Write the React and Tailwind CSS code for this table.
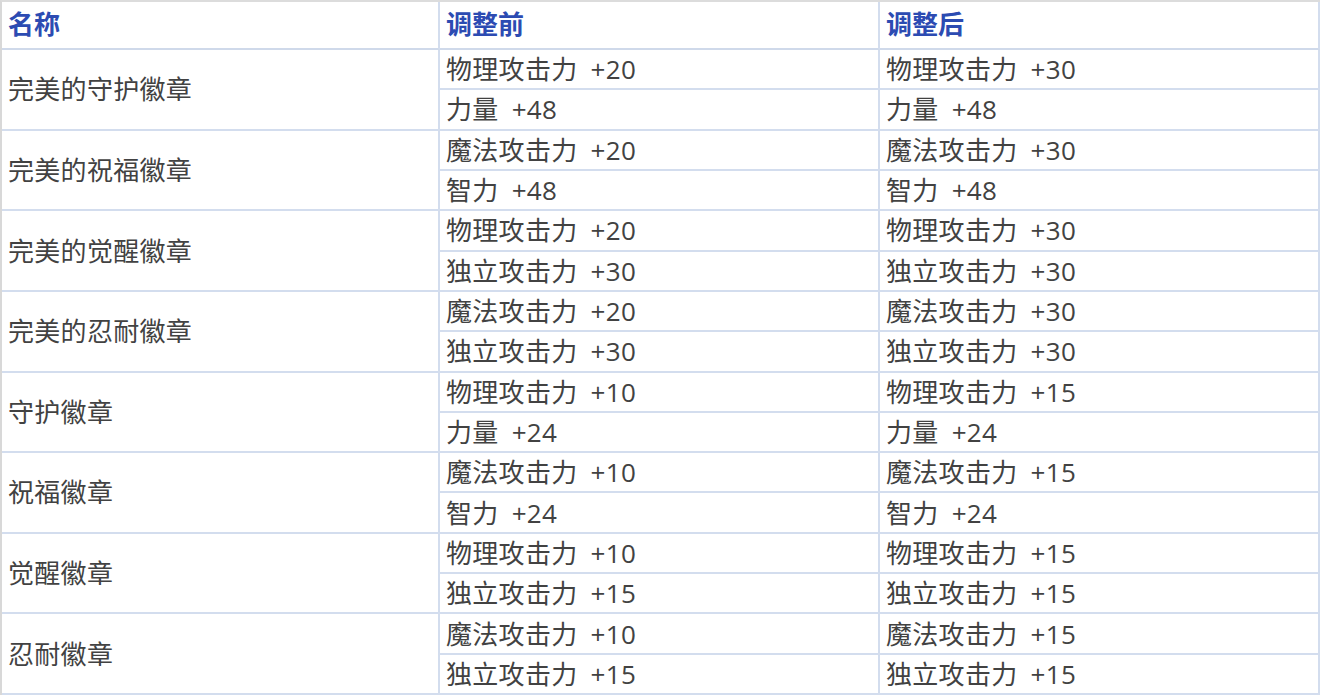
import React from 'react'

const groups = [
  { name: '完美的守护徽章', rows: [['物理攻击力 +20', '物理攻击力 +30'], ['力量 +48', '力量 +48']] },
  { name: '完美的祝福徽章', rows: [['魔法攻击力 +20', '魔法攻击力 +30'], ['智力 +48', '智力 +48']] },
  { name: '完美的觉醒徽章', rows: [['物理攻击力 +20', '物理攻击力 +30'], ['独立攻击力 +30', '独立攻击力 +30']] },
  { name: '完美的忍耐徽章', rows: [['魔法攻击力 +20', '魔法攻击力 +30'], ['独立攻击力 +30', '独立攻击力 +30']] },
  { name: '守护徽章', rows: [['物理攻击力 +10', '物理攻击力 +15'], ['力量 +24', '力量 +24']] },
  { name: '祝福徽章', rows: [['魔法攻击力 +10', '魔法攻击力 +15'], ['智力 +24', '智力 +24']] },
  { name: '觉醒徽章', rows: [['物理攻击力 +10', '物理攻击力 +15'], ['独立攻击力 +15', '独立攻击力 +15']] },
  { name: '忍耐徽章', rows: [['魔法攻击力 +10', '魔法攻击力 +15'], ['独立攻击力 +15', '独立攻击力 +15']] },
]

const font = { fontFamily: '"Open Sans", "Noto Sans CJK SC", sans-serif' }

function Cell({ children, span }) {
  return (
    <div className={`${span ? 'row-span-2 ' : ''}flex items-center pl-[6px] border-b-2 border-r-2 border-[#d3ddee]`}>
      <span className="text-[26px] text-[#424242] leading-none [word-spacing:6px] tracking-[0.3px]">{children}</span>
    </div>
  )
}

export default function App() {
  return (
    <div className="w-[1320px] h-[695px] bg-white overflow-hidden" style={font}>
      <div className="grid grid-cols-[438px_440px_440px] grid-rows-[48px_repeat(16,minmax(0,1fr))] h-[695px] border-t-2 border-l-2 border-t-[#dcdcdc] border-l-[#d8d8d8]">
        {['名称', '调整前', '调整后'].map(h => (
          <div key={h} className="flex items-center pl-[6px] pb-[3px] border-b-2 border-r-2 border-b-[#cfd9ea] border-r-[#d3ddee]">
            <span className="text-[26px] font-bold text-[#2c4bb2] leading-none">{h}</span>
          </div>
        ))}
        {groups.map(g => (
          <React.Fragment key={g.name}>
            <Cell span>{g.name}</Cell>
            {g.rows.map((r, ri) => (
              <React.Fragment key={ri}>
                <Cell>{r[0]}</Cell>
                <Cell>{r[1]}</Cell>
              </React.Fragment>
            ))}
          </React.Fragment>
        ))}
      </div>
    </div>
  )
}
